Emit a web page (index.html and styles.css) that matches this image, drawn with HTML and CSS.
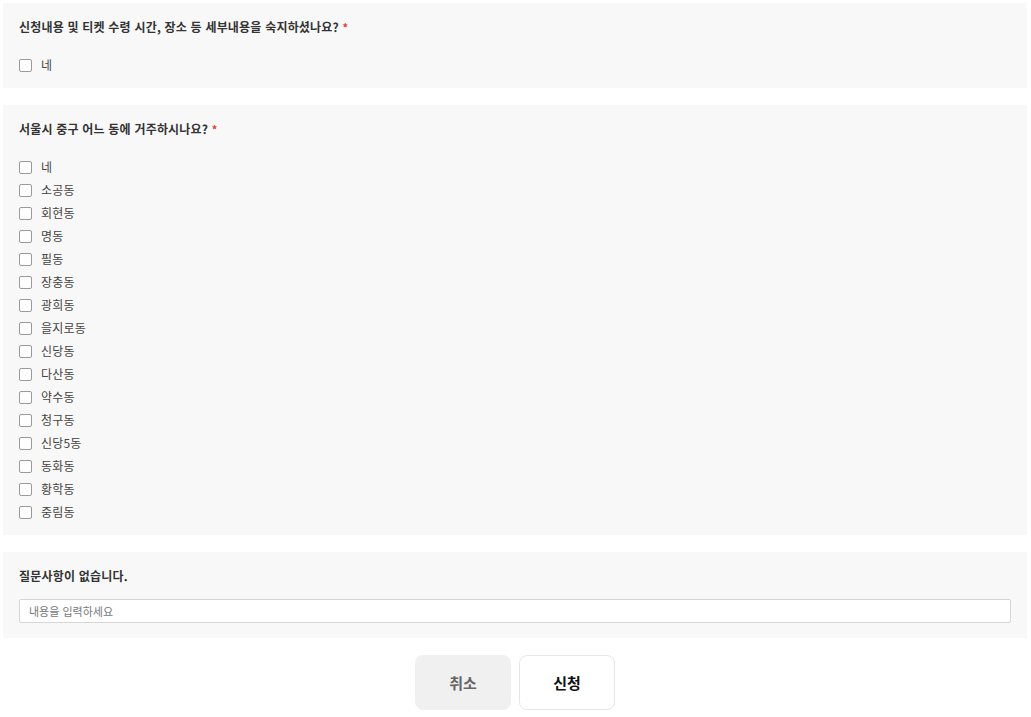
FILE: index.html
```html
<!DOCTYPE html>
<html lang="ko">
<head>
<meta charset="utf-8">
<link rel="stylesheet" href="styles.css">
</head>
<body>
<div class="page">
  <section class="card">
    <div class="q-title">신청내용 및 티켓 수령 시간, 장소 등 세부내용을 숙지하셨나요? <span class="req">*</span></div>
    <div class="options first">
      <label class="opt"><span class="box"></span><span class="lbl">네</span></label>
    </div>
  </section>
  <section class="card">
    <div class="q-title">서울시 중구 어느 동에 거주하시나요? <span class="req">*</span></div>
    <div class="options">
      <label class="opt"><span class="box"></span><span class="lbl">네</span></label>
      <label class="opt"><span class="box"></span><span class="lbl">소공동</span></label>
      <label class="opt"><span class="box"></span><span class="lbl">회현동</span></label>
      <label class="opt"><span class="box"></span><span class="lbl">명동</span></label>
      <label class="opt"><span class="box"></span><span class="lbl">필동</span></label>
      <label class="opt"><span class="box"></span><span class="lbl">장충동</span></label>
      <label class="opt"><span class="box"></span><span class="lbl">광희동</span></label>
      <label class="opt"><span class="box"></span><span class="lbl">을지로동</span></label>
      <label class="opt"><span class="box"></span><span class="lbl">신당동</span></label>
      <label class="opt"><span class="box"></span><span class="lbl">다산동</span></label>
      <label class="opt"><span class="box"></span><span class="lbl">약수동</span></label>
      <label class="opt"><span class="box"></span><span class="lbl">청구동</span></label>
      <label class="opt"><span class="box"></span><span class="lbl">신당5동</span></label>
      <label class="opt"><span class="box"></span><span class="lbl">동화동</span></label>
      <label class="opt"><span class="box"></span><span class="lbl">황학동</span></label>
      <label class="opt"><span class="box"></span><span class="lbl">중림동</span></label>
    </div>
  </section>
  <section class="card">
    <div class="q-title">질문사항이 없습니다.</div>
    <div class="input">내용을 입력하세요</div>
  </section>
  <div class="actions">
    <button class="btn cancel">취소</button>
    <button class="btn submit">신청</button>
  </div>
</div>
</body>
</html>
```
FILE: styles.css
```css
html, body {
  margin: 0;
  padding: 0;
  background: #fff;
}
body {
  font-family: "Noto Sans CJK KR", "Noto Sans", sans-serif;
  color: #333;
}
.page {
  padding: 3px 4px 0 3px;
  display: flex;
  flex-direction: column;
  gap: 17px;
}
.card {
  background: #f8f8f8;
  padding: 16px 16px 15px 16px;
  display: flex;
  flex-direction: column;
}
.q-title {
  font-size: 12px;
  font-weight: 700;
  line-height: 16px;
  color: #333;
  letter-spacing: 0.2px;
}
.req {
  color: #e53935;
  font-size: 11px;
}
.options {
  display: flex;
  flex-direction: column;
  margin-top: 22px;
  gap: 7px;
}
.opt {
  display: flex;
  align-items: center;
  height: 16px;
  gap: 9px;
}
.box {
  width: 11px;
  height: 11px;
  border: 1px solid #9a9a9a;
  border-radius: 2px;
  background: #fff;
}
.lbl {
  font-size: 12px;
  color: #444;
  line-height: 16px;
  letter-spacing: 0.2px;
}
.input {
  margin-top: 15px;
  height: 22px;
  border: 1px solid #d6d6d6;
  border-radius: 2px;
  background: #fff;
  font-size: 11px;
  line-height: 22px;
  padding-left: 9px;
  color: #777;
}
.actions {
  display: flex;
  justify-content: center;
  gap: 8px;
}
.btn {
  width: 96px;
  height: 55px;
  border-radius: 8px;
  font-family: "Noto Sans CJK KR", sans-serif;
  font-size: 15px;
  font-weight: 700;
}
.cancel {
  background: #f0f0f0;
  border: 1px solid #f0f0f0;
  color: #666;
}
.submit {
  background: #fff;
  border: 1px solid #e6e6e6;
  color: #111;
}
```
